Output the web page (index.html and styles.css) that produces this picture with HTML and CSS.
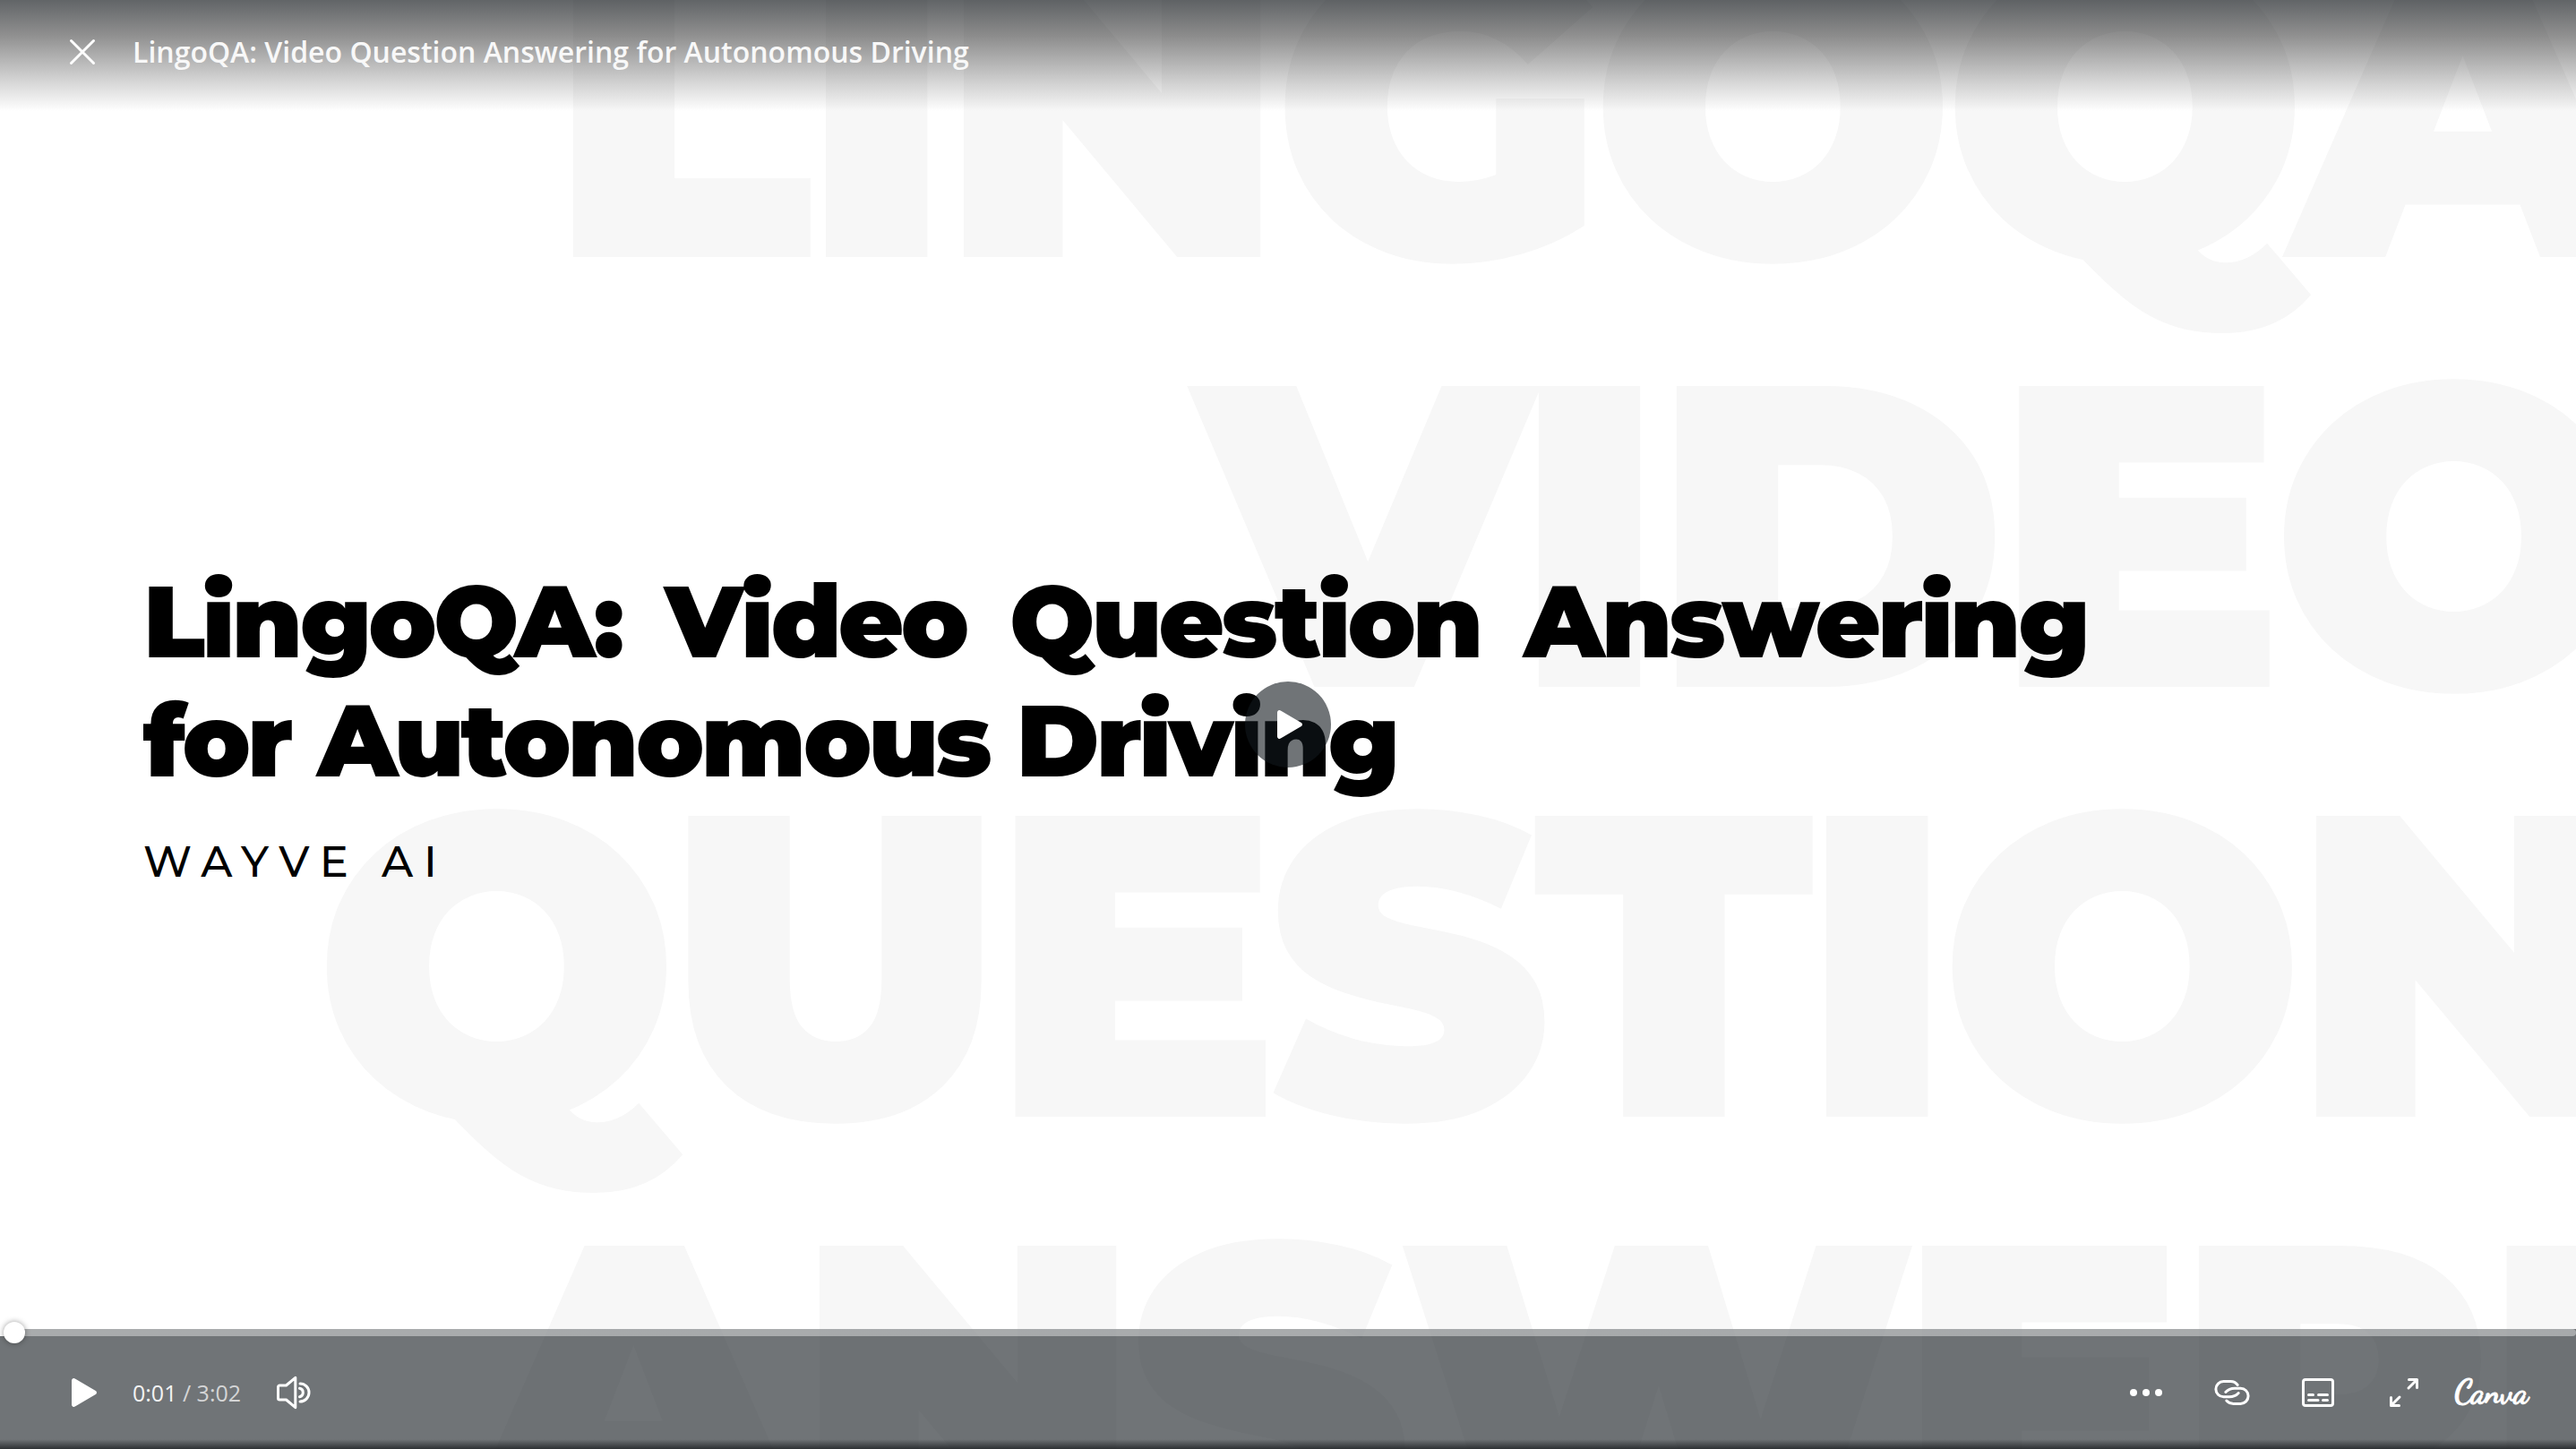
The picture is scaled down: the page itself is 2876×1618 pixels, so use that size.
FILE: index.html
```html
<!DOCTYPE html>
<html lang="en">
<head>
<meta charset="utf-8">
<meta name="viewport" content="width=device-width, initial-scale=1">
<title>LingoQA: Video Question Answering for Autonomous Driving</title>
<link rel="stylesheet" href="styles.css">
</head>
<body>
<main class="viewer">
  <div class="watermark" aria-hidden="true">
    <span class="word word-lingoqa">LINGOQA</span>
    <span class="word word-video">VIDEO</span>
    <span class="word word-question">QUESTION</span>
    <span class="word word-answering">ANSWERING</span>
  </div>

  <section class="slide">
    <h1 class="slide-title">LingoQA: Video Question Answering for Autonomous Driving</h1>
    <p class="slide-author">WAYVE AI</p>
  </section>

  <button class="big-play" type="button" aria-label="Play video">
    <svg class="icon" viewBox="0 0 48 48"><path class="solid" d="M12 10.500a2.500 2.500 0 0 1 3.800-2.100l23 13.600a2.300 2.300 0 0 1 0 4l-23 13.600a2.500 2.500 0 0 1-3.800-2.100z"/></svg>
  </button>

  <header class="top-bar">
    <button class="icon-button" type="button" aria-label="Close">
      <svg class="icon" viewBox="0 0 48 48"><path class="line" d="M11.500 11.500l25 25M36.500 11.500l-25 25"/></svg>
    </button>
    <span class="video-name">LingoQA: Video Question Answering for Autonomous Driving</span>
  </header>

  <footer class="controls">
    <input class="seek" type="range" min="0" max="182" step="0.25" value="0.25" aria-label="Seek">
    <div class="control-row">
      <button class="icon-button" type="button" aria-label="Play">
        <svg class="icon" viewBox="0 0 48 48"><path class="solid" d="M12 10.500a2.500 2.500 0 0 1 3.800-2.100l23 13.600a2.300 2.300 0 0 1 0 4l-23 13.600a2.500 2.500 0 0 1-3.800-2.100z"/></svg>
      </button>
      <span class="time">0:01 <span class="total">/ 3:02</span></span>
      <button class="icon-button" type="button" aria-label="Volume">
        <svg class="icon" viewBox="0 0 48 48"><path class="line" d="M15.500 32H8.200a1.700 1.700 0 0 1-1.700-1.700V17.700A1.700 1.700 0 0 1 8.200 16h7.300l10.300-8.700V40.700zM31 14a10 10 0 1 1 0 20M30.500 19.300a4.800 4.800 0 0 1 0 9.400"/></svg>
      </button>
      <div class="tools">
        <button class="icon-button" type="button" aria-label="More">
          <svg class="icon" viewBox="0 0 48 48"><circle class="solid" cx="10" cy="24" r="4"/><circle class="solid" cx="24" cy="24" r="4"/><circle class="solid" cx="38" cy="24" r="4"/></svg>
        </button>
        <button class="icon-button" type="button" aria-label="Copy link">
          <svg class="icon" viewBox="0 0 48 48"><path class="line" d="M30.200 15.500C28 12.800 25.500 11.600 22.500 11.600H14.500a8.600 8.600 0 0 0 0 17.200H21C25.500 28.800 28.500 27.500 31.200 24.500M17.800 33C20 35.300 22.500 36.400 25.500 36.400H33.500a8.600 8.600 0 0 0 0-17.200H27C22.500 19.200 19.500 20.500 16.800 23.500"/></svg>
        </button>
        <button class="icon-button" type="button" aria-label="Captions">
          <svg class="icon" viewBox="0 0 48 48"><rect class="line" x="7.500" y="9.500" width="33" height="29" rx="2.500"/><path class="line" d="M13.500 26.500h5M24.500 26.500h10M13.500 32.500h10.500M29.500 32.500h5"/></svg>
        </button>
        <button class="icon-button" type="button" aria-label="Full screen">
          <svg class="icon" viewBox="0 0 48 48"><path class="line" d="M29.500 9.500h9v9M38.500 9.500l-9.500 9.500M9.500 29.500v9h9M9.500 38.500l9.500-9.500"/></svg>
        </button>
        <a class="brand" href="#">Canva</a>
      </div>
    </div>
  </footer>
</main>
</body>
</html>
```
FILE: styles.css
```css
* {
  box-sizing: border-box;
}

body {
  margin: 0;
  background: #fff;
  color: #000;
  font-family: "Open Sans", "Noto Sans", sans-serif;
}

/* Every layer of the player shares the one grid cell. */
.viewer {
  display: grid;
  grid-template: 100vh / 100%;
  overflow: hidden;
}

.viewer > * {
  grid-area: 1 / 1;
}

/* Oversized words behind the slide */
.watermark {
  display: flex;
  flex-direction: column;
  margin-top: -125px;
  overflow: hidden;
  color: #f7f7f7;
  font-family: Montserrat, Inter, sans-serif;
  font-size: 480px;
  font-weight: 900;
  letter-spacing: -14px;
  line-height: 480px;
  white-space: nowrap;
}

.word {
  flex: none;
}

.word-lingoqa {
  padding-left: 21.3%;
}

.word-video {
  padding-left: 46.4%;
}

.word-question {
  padding-left: 12.2%;
}

.word-answering {
  padding-left: 17.9%;
}

/* Slide */
.slide {
  display: flex;
  flex-direction: column;
  justify-content: center;
  padding: 4px 546px 0 160px;
  font-family: Montserrat, Inter, sans-serif;
}

.slide-title {
  margin: 0;
  font-size: 112px;
  font-weight: 900;
  letter-spacing: -0.03em;
  line-height: 133px;
  text-align: justify;
}

.slide-author {
  margin: 36px 0 0;
  font-size: 48px;
  font-weight: 500;
  letter-spacing: 12px;
  line-height: 64px;
}

/* Buttons and icons */
button {
  display: grid;
  place-items: center;
  padding: 0;
  border: 0;
  background: none;
  color: #fff;
  cursor: pointer;
}

.icon {
  display: block;
  width: 48px;
  height: 48px;
}

.solid {
  fill: currentColor;
}

.line {
  fill: none;
  stroke: currentColor;
  stroke-width: 3;
  stroke-linecap: round;
  stroke-linejoin: round;
}

.big-play {
  place-self: center;
  width: 96px;
  height: 96px;
  border-radius: 50%;
  background: rgba(17, 23, 28, 0.6);
}

/* Top bar */
.top-bar {
  display: flex;
  align-items: center;
  align-self: start;
  gap: 32px;
  height: 124px;
  padding: 0 68px 8px;
  background: linear-gradient(rgba(13, 18, 22, 0.65), rgba(13, 13, 13, 0.46) 32%, rgba(13, 13, 13, 0.16) 75%, transparent);
}

.video-name {
  color: #f8f8f8;
  font-size: 32px;
  font-weight: 600;
  line-height: 48px;
}

/* Bottom controls */
.controls {
  display: flex;
  flex-direction: column;
  align-self: end;
  background: linear-gradient(transparent 92%, rgba(17, 20, 23, 0.7)), rgba(17, 23, 28, 0.6);
}

.seek {
  display: block;
  width: 100%;
  height: 8px;
  margin: 0;
  appearance: none;
  background: linear-gradient(90deg, #fff 16px, rgba(255, 255, 255, 0.4) 16px);
  border-radius: 0 4px 4px 0;
  cursor: pointer;
}

.seek::-webkit-slider-thumb {
  width: 24px;
  height: 24px;
  appearance: none;
  border-radius: 50%;
  background: #fff;
  box-shadow: 0 0 6px rgba(0, 0, 0, 0.4);
}

.control-row {
  display: flex;
  align-items: center;
  gap: 32px;
  height: 126px;
  padding: 0 56px 0 68px;
}

.time {
  min-width: 124px;
  color: #f3f3f3;
  font-size: 25px;
  line-height: 32px;
}

.total {
  color: #d4d5d6;
}

.tools {
  display: flex;
  align-items: center;
  gap: 48px;
  margin-left: auto;
}

.brand {
  width: 80px;
  margin-left: -16px;
  color: #fff;
  font-family: "Dancing Script", "Liberation Serif", cursive;
  font-size: 36px;
  font-weight: 700;
  line-height: 48px;
  text-decoration: none;
  -webkit-text-stroke: 1px currentColor;
}
```
